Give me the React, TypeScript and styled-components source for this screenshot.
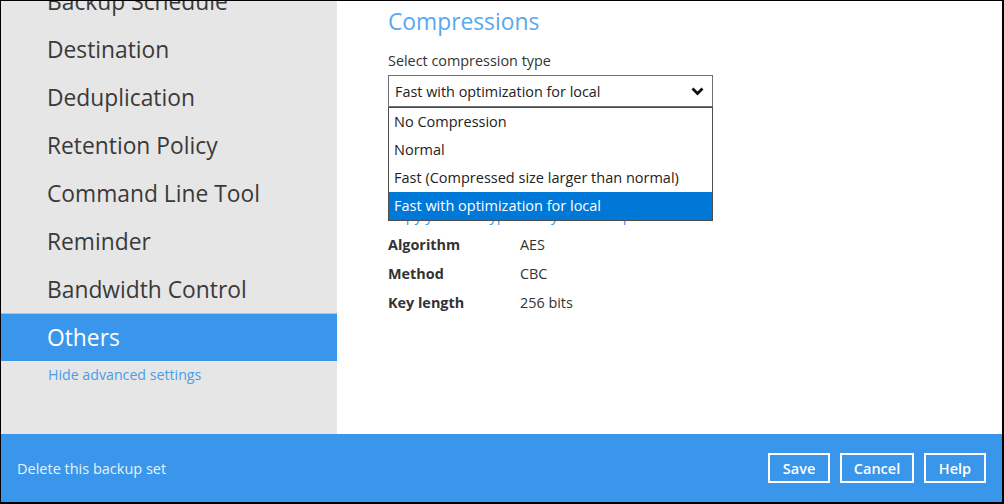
import React from "react";
import styled, { createGlobalStyle } from "styled-components";

const Global = createGlobalStyle`
  html, body { margin: 0; padding: 0; background: #fff; }
  body { font-family: "Open Sans", "Noto Sans", "Liberation Sans", sans-serif; }
  * { box-sizing: border-box; }
`;

const Frame = styled.div`
  width: 1004px;
  height: 504px;
  border: 1px solid #000;
  border-right-width: 2px;
  border-bottom-width: 2px;
  display: flex;
  flex-direction: column;
  overflow: hidden;
`;

const Main = styled.div`
  flex: 1;
  display: flex;
  min-height: 0;
`;

const Sidebar = styled.nav`
  width: 336px;
  flex: none;
  background: #e6e6e6;
  overflow: hidden;
`;

const NavList = styled.ul`
  list-style: none;
  margin: -24px 0 0;
  padding: 0;
`;

const NavItem = styled.li<{ $active?: boolean }>`
  height: 48px;
  line-height: 48px;
  padding: 1px 0 0 46px;
  font-size: 22.8px;
  color: ${(p) => (p.$active ? "#fff" : "#3a3a3a")};
  background: ${(p) => (p.$active ? "#3a96eb" : "transparent")};
  box-shadow: ${(p) => (p.$active ? "inset 0 1px 0 #9cc8f0" : "none")};
  white-space: nowrap;
`;

const HideLink = styled.a`
  display: block;
  padding-left: 47px;
  margin-top: 4px;
  font-size: 14.2px;
  line-height: 20px;
  color: #4a9de9;
`;

const Content = styled.section`
  flex: 1;
  padding-left: 51px;
  background: #fff;
`;

const Heading = styled.h1`
  margin: 5px 0 0;
  font-size: 22.8px;
  line-height: 32px;
  font-weight: 400;
  color: #5aa8ee;
`;

const Label = styled.div`
  margin-top: 13px;
  font-size: 14.4px;
  line-height: 20px;
  color: #333;
`;

const SelectWrap = styled.div`
  position: relative;
  margin-top: 4px;
  width: 325px;
`;

const SelectBox = styled.div`
  height: 32px;
  border: 1.5px solid #707070;
  display: flex;
  align-items: center;
  justify-content: space-between;
  padding: 0 8px 0 6px;
  font-size: 14.4px;
  color: #222;
`;

const Menu = styled.ul`
  position: absolute;
  left: 0;
  top: 100%;
  width: 325px;
  margin: 0;
  padding: 0;
  list-style: none;
  background: #fff;
  border: 1px solid #4d4d4d;
  z-index: 2;
`;

const MenuItem = styled.li<{ $selected?: boolean }>`
  height: 28px;
  line-height: 28px;
  padding-left: 5px;
  font-size: 14.5px;
  color: ${(p) => (p.$selected ? "#fff" : "#222")};
  background: ${(p) => (p.$selected ? "#0078d7" : "#fff")};
  white-space: nowrap;
`;

const HiddenLink = styled.a`
  display: block;
  margin-top: 99px;
  font-size: 14.4px;
  line-height: 20px;
  color: #3a96eb;
`;

const Details = styled.div`
  margin-top: 4px;
`;

const DetailRow = styled.div`
  display: flex;
  height: 29px;
  align-items: center;
  font-size: 14.4px;
  color: #333;
`;

const DetailKey = styled.span`
  width: 132px;
  font-weight: 700;
`;

const Footer = styled.footer`
  height: 68px;
  flex: none;
  background: #3a96eb;
  display: flex;
  align-items: center;
  justify-content: space-between;
  padding: 0 16px 0 16px;
`;

const FooterLink = styled.a`
  font-size: 14.5px;
  color: #e6f1fc;
`;

const Buttons = styled.div`
  display: flex;
  gap: 10px;
`;

const Button = styled.button<{ $w: number }>`
  width: ${(p) => p.$w}px;
  height: 30px;
  background: transparent;
  border: 2px solid #fff;
  color: #fff;
  font-family: inherit;
  font-size: 14.5px;
  font-weight: 600;
  padding: 0;
`;

const Chevron = () => (
  <svg width="13" height="9" viewBox="0 0 13 9">
    <path d="M1.5 1.5 L6.5 6.5 L11.5 1.5" fill="none" stroke="#111" strokeWidth="2.8" strokeLinejoin="miter" />
  </svg>
);

const navItems = [
  "Backup Schedule",
  "Destination",
  "Deduplication",
  "Retention Policy",
  "Command Line Tool",
  "Reminder",
  "Bandwidth Control",
  "Others",
];

const options = [
  "No Compression",
  "Normal",
  "Fast (Compressed size larger than normal)",
  "Fast with optimization for local",
];

export default function App() {
  return (
    <>
      <Global />
      <Frame>
        <Main>
          <Sidebar>
            <NavList>
              {navItems.map((n) => (
                <NavItem key={n} $active={n === "Others"}>
                  {n}
                </NavItem>
              ))}
            </NavList>
            <HideLink>Hide advanced settings</HideLink>
          </Sidebar>
          <Content>
            <Heading>Compressions</Heading>
            <Label>Select compression type</Label>
            <SelectWrap>
              <SelectBox>
                <span>Fast with optimization for local</span>
                <Chevron />
              </SelectBox>
              <Menu>
                {options.map((o) => (
                  <MenuItem key={o} $selected={o === "Fast with optimization for local"}>
                    {o}
                  </MenuItem>
                ))}
              </Menu>
            </SelectWrap>
            <HiddenLink>Copy your encryption key to a safe place</HiddenLink>
            <Details>
              <DetailRow>
                <DetailKey>Algorithm</DetailKey>
                <span>AES</span>
              </DetailRow>
              <DetailRow>
                <DetailKey>Method</DetailKey>
                <span>CBC</span>
              </DetailRow>
              <DetailRow>
                <DetailKey>Key length</DetailKey>
                <span>256 bits</span>
              </DetailRow>
            </Details>
          </Content>
        </Main>
        <Footer>
          <FooterLink>Delete this backup set</FooterLink>
          <Buttons>
            <Button $w={62}>Save</Button>
            <Button $w={74}>Cancel</Button>
            <Button $w={62}>Help</Button>
          </Buttons>
        </Footer>
      </Frame>
    </>
  );
}
